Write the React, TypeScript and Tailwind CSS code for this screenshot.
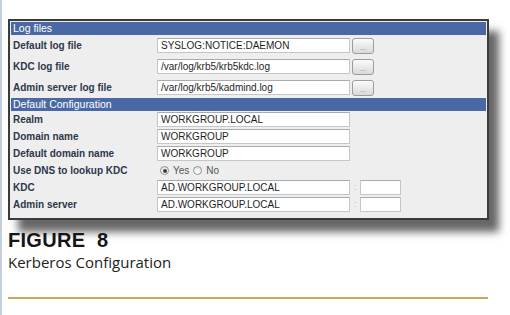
const font = "font-['Liberation_Sans',Arial,sans-serif]";

function Header({ title }: { title: string }) {
  return (
    <div className="h-[13px] bg-[#4a69a4] pl-[2px] text-[10.5px] leading-[13px] text-white">
      {title}
    </div>
  );
}

function TextBox({ value, width }: { value: string; width: string }) {
  return (
    <div
      className={`${width} h-[15px] border border-[#c6c6c6] border-t-[#ababab] bg-white pl-[3px] text-[10px] leading-[13px] text-[#1e1e1e]`}
    >
      {value}
    </div>
  );
}

function BrowseButton() {
  return (
    <div className="ml-[2px] flex h-[16px] w-[22px] items-end justify-center rounded-[3px] border border-[#9c9c9c] bg-gradient-to-b from-[#fbfbfb] to-[#d9d9d9] pb-[2px] text-[7px] leading-[7px] text-[#777]">
      ...
    </div>
  );
}

function Label({ text }: { text: string }) {
  return (
    <div className="w-[146px] shrink-0 pl-[2px] text-[10px] font-bold text-[#2d374b]">{text}</div>
  );
}

function LogRow({ label, value }: { label: string; value: string }) {
  return (
    <div className="flex h-[21px] items-center">
      <Label text={label} />
      <TextBox value={value} width="w-[193px]" />
      <BrowseButton />
    </div>
  );
}

function ConfRow({ label, children }: { label: string; children: React.ReactNode }) {
  return (
    <div className="flex h-[17px] items-center">
      <Label text={label} />
      {children}
    </div>
  );
}

function HostRow({ label, value }: { label: string; value: string }) {
  return (
    <ConfRow label={label}>
      <TextBox value={value} width="w-[193px]" />
      <span className="w-[10px] text-center text-[9px] text-[#b5b5b5]">:</span>
      <TextBox value="" width="w-[41px]" />
    </ConfRow>
  );
}

function Radio({ checked }: { checked?: boolean }) {
  return (
    <span className="flex h-[9px] w-[9px] items-center justify-center rounded-full border border-[#8f8f8f] bg-gradient-to-b from-[#e4e4e4] to-white">
      {checked && <span className="h-[4px] w-[4px] rounded-full bg-[#3e3e3e]" />}
    </span>
  );
}

export default function App() {
  return (
    <div
      className={`${font} h-[315px] w-[510px] overflow-hidden border-l-2 border-[#c5cedb] bg-white pl-[6px] pt-[19px]`}
    >
      <div className="w-[481px] border-2 border-[#3b3b3b] bg-[#eeeeee] p-px pb-[5px] shadow-[10px_12px_8px_rgba(0,0,0,0.6)]">
        <Header title="Log files" />
        <LogRow label="Default log file" value="SYSLOG:NOTICE:DAEMON" />
        <LogRow label="KDC log file" value="/var/log/krb5/krb5kdc.log" />
        <LogRow label="Admin server log file" value="/var/log/krb5/kadmind.log" />
        <Header title="Default Configuration" />
        <ConfRow label="Realm">
          <TextBox value="WORKGROUP.LOCAL" width="w-[193px]" />
        </ConfRow>
        <ConfRow label="Domain name">
          <TextBox value="WORKGROUP" width="w-[193px]" />
        </ConfRow>
        <ConfRow label="Default domain name">
          <TextBox value="WORKGROUP" width="w-[193px]" />
        </ConfRow>
        <ConfRow label="Use DNS to lookup KDC">
          <div className="flex items-center gap-[4px] pl-[3px] text-[10px] text-[#555]">
            <Radio checked />
            <span>Yes</span>
            <Radio />
            <span>No</span>
          </div>
        </ConfRow>
        <HostRow label="KDC" value="AD.WORKGROUP.LOCAL" />
        <HostRow label="Admin server" value="AD.WORKGROUP.LOCAL" />
      </div>

      <div className="mt-[8px] text-[20px] font-bold leading-[24px] tracking-[0.3px] text-[#161616]">
        FIGURE&nbsp;&nbsp;8
      </div>
      <div className="font-['Open_Sans',sans-serif] text-[15px] leading-[20px] text-[#222]">
        Kerberos Configuration
      </div>
      <div className="mt-[25px] h-[2px] w-[480px] bg-[#c8a75f]" />
    </div>
  );
}
